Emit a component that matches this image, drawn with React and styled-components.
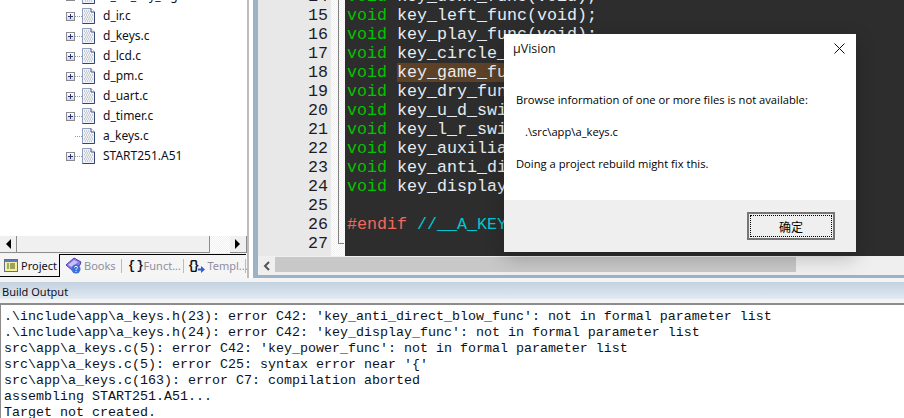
import styled, { createGlobalStyle } from 'styled-components';

const GlobalStyle = createGlobalStyle`
    html, body {
        margin: 0;
        padding: 0;
        background: #f4f4f4;
    }
`;

const Page = styled.div`
    position: relative;
    width: 904px;
    height: 418px;
    overflow: hidden;
    display: flex;
    flex-direction: column;
    background: #f4f4f4;
`;

const Workspace = styled.div`
    display: flex;
    height: 278px;
    flex-shrink: 0;
`;

const ProjectPane = styled.div`
    width: 247px;
    display: flex;
    flex-direction: column;
    border-right: 2px solid #bdbdbd;
    background: #fff;
`;

const Tree = styled.div`
    flex: 1;
    height: 236px;
    overflow: hidden;
    font-family: "Noto Sans", sans-serif;
    font-size: 12px;
    color: #10101a;
`;

const TreeList = styled.div`
    margin-top: -14px;
    padding-left: 66px;
    background-image: linear-gradient(#999 50%, transparent 50%);
    background-size: 1px 2px;
    background-repeat: no-repeat;
    background-position: 70px 0;
`;

const TreeRow = styled.div`
    display: flex;
    align-items: center;
    height: 20px;
`;

const Toggle = styled.div`
    width: 9px;
    height: 9px;
    box-sizing: border-box;
    border: 1px solid #8a8a8a;
    background: linear-gradient(#fff, #d8d8d8);
    position: relative;
    flex-shrink: 0;
    visibility: ${(p) => (p.$hidden ? 'hidden' : 'visible')};
    &::before {
        content: '';
        position: absolute;
        left: 1px;
        top: 3px;
        width: 5px;
        height: 1px;
        background: #24357e;
    }
    &::after {
        content: '';
        position: absolute;
        left: 3px;
        top: 1px;
        width: 1px;
        height: 5px;
        background: #24357e;
    }
`;

const Connector = styled.div`
    width: 7px;
    height: 1px;
    flex-shrink: 0;
    background-image: linear-gradient(90deg, #999 50%, transparent 50%);
    background-size: 2px 1px;
`;

const FileName = styled.span`
    margin-left: 8px;
    margin-top: -1px;
    white-space: nowrap;
`;

const TreeScroll = styled.div`
    height: 17px;
    display: flex;
    background: repeating-conic-gradient(#f0f0f0 0 25%, #fff 0 50%) 0 0 / 2px 2px;
    border-bottom: 1px solid #f0f0f0;
`;

const ScrollButton = styled.div`
    width: 17px;
    box-sizing: border-box;
    background: #f0f0f0;
    border-right: 1px solid #8d8d8d;
    border-bottom: 1px solid #8d8d8d;
    display: flex;
    align-items: center;
    justify-content: center;
    flex-shrink: 0;
`;

const ScrollThumb = styled.div`
    width: 193px;
    box-sizing: border-box;
    background: #f0f0f0;
    border-right: 1px solid #8d8d8d;
    border-bottom: 1px solid #8d8d8d;
`;

const ScrollTrack = styled.div`
    flex: 1;
`;

const Tabs = styled.div`
    height: 24px;
    display: flex;
    align-items: stretch;
    background: #f5f5f5;
    font-family: "Noto Sans", sans-serif;
    font-size: 11px;
`;

const ActiveTab = styled.div`
    width: 60px;
    height: 23px;
    box-sizing: border-box;
    display: flex;
    align-items: center;
    gap: 3px;
    padding: 1px 0 0 4px;
    border-right: 1px solid #000;
    border-bottom: 1px solid #000;
    color: #10101a;
    flex-shrink: 0;
`;

const Tab = styled.div`
    width: ${(p) => p.$width}px;
    height: 22px;
    box-sizing: border-box;
    border-top: 1px solid #000;
    display: flex;
    align-items: center;
    gap: ${(p) => p.$gap}px;
    padding-left: ${(p) => p.$pad}px;
    color: #8f8f9f;
    white-space: nowrap;
    flex-shrink: 0;
    position: relative;
    &::after {
        content: '';
        position: absolute;
        right: 0;
        top: 4px;
        height: 14px;
        width: 1px;
        background: #bbb;
    }
`;

const Braces = styled.span`
    font-family: "Liberation Mono", monospace;
    font-size: 12px;
    font-weight: 700;
    letter-spacing: -3px;
    color: #111;
`;

const Divider = styled.div`
    width: 4px;
    background: #fff;
    flex-shrink: 0;
`;

const EditorPane = styled.div`
    flex: 1;
    min-width: 0;
    display: flex;
    flex-direction: column;
    border: 1px solid #9db2c4;
    border-left-width: 5px;
    border-top: 0;
    border-right: 0;
    border-bottom-width: 3px;
`;

const EditorBody = styled.div`
    height: 256px;
    display: flex;
    overflow: hidden;
    flex-shrink: 0;
`;

const Gutter = styled.div`
    width: 73px;
    background: #e8e8e8;
    flex-shrink: 0;
`;

const FoldMargin = styled.div`
    width: 14px;
    flex-shrink: 0;
    position: relative;
    background: repeating-conic-gradient(#f0f0f0 0 25%, #fff 0 50%) 0 0 / 2px 2px;
    &::after {
        content: '';
        position: absolute;
        left: 7px;
        top: 0;
        width: 6px;
        height: 244px;
        box-sizing: border-box;
        border-left: 1px solid #808080;
        border-bottom: 1px solid #808080;
    }
`;

const Code = styled.div`
    flex: 1;
    background: #2d2d2d;
    padding-left: 2px;
`;

const Lines = styled.div`
    margin-top: -13px;
    font-family: "Liberation Mono", monospace;
    font-size: 16.67px;
    line-height: 19px;
    white-space: pre;
`;

const LineNumber = styled.div`
    height: 19px;
    text-align: right;
    padding-right: 3px;
    color: #1c1c28;
`;

const Keyword = styled.span`
    color: #00c400;
`;

const Ident = styled.span`
    color: #e6ecf2;
    background: ${(p) => (p.$marked ? '#5c4126' : 'transparent')};
`;

const Directive = styled.span`
    color: #f2695c;
`;

const Comment = styled.span`
    color: #00c8d0;
`;

const CodeLine = styled.div`
    height: 19px;
`;

const EditorScroll = styled.div`
    height: 19px;
    display: flex;
    background: #efefef;
`;

const ArrowCell = styled.div`
    width: 17px;
    display: flex;
    align-items: center;
    justify-content: center;
    flex-shrink: 0;
`;

const EditorThumb = styled.div`
    width: 521px;
    height: 15px;
    margin-top: 1px;
    background: #c8c8c8;
`;

const Output = styled.div`
    flex: 1;
    display: flex;
    flex-direction: column;
    background: #fff;
    margin-top: 4px;
    min-height: 0;
`;

const OutputHeader = styled.div`
    height: 17px;
    flex-shrink: 0;
    padding: 2px 0 0 2px;
    box-sizing: border-box;
    display: flex;
    align-items: center;
    background: linear-gradient(#c3d2e0, #e2eaf2);
    font-family: "Noto Sans", sans-serif;
    font-size: 11px;
    color: #10101a;
`;

const OutputGap = styled.div`
    height: 4px;
    flex-shrink: 0;
    background: #f4f4f4;
    border-bottom: 2px solid #8c8c8c;
`;

const OutputText = styled.div`
    flex: 1;
    min-height: 0;
    border-left: 1px solid #8c8c8c;
    padding: 4px 0 0 3px;
    font-family: "Liberation Mono", monospace;
    font-size: 13.33px;
    line-height: 16px;
    color: #111;
    white-space: pre;
    overflow: hidden;
`;

const Dialog = styled.div`
    position: absolute;
    left: 504px;
    top: 34px;
    width: 352px;
    height: 218px;
    background: #fff;
    display: flex;
    flex-direction: column;
    box-shadow: 0 6px 18px rgba(0, 0, 0, 0.22);
    font-family: "Open Sans", "Noto Sans", sans-serif;
    font-size: 11.2px;
    color: #000;
`;

const DialogTitleBar = styled.div`
    height: 28px;
    display: flex;
    align-items: center;
    justify-content: space-between;
    padding: 0 11px 0 9px;
    font-size: 12.5px;
    color: #111;
`;

const DialogBody = styled.div`
    flex: 1;
    padding: 30px 12px 0;
    line-height: 16px;
`;

const Paragraph = styled.div`
    margin-bottom: 16px;
    padding-left: ${(p) => p.$indent || 0}px;
`;

const DialogFooter = styled.div`
    height: 52px;
    background: #efefef;
    display: flex;
    justify-content: flex-end;
    padding: 12px 21px 0 0;
    box-sizing: border-box;
`;

const OkButton = styled.button`
    width: 88px;
    height: 28px;
    box-sizing: border-box;
    border: 2px solid #767676;
    background: #efefef;
    padding: 1px;
    font-family: "Noto Sans CJK SC", sans-serif;
    font-size: 12px;
    color: #000;
`;

const FocusRing = styled.div`
    height: 100%;
    border: 1px dotted #000;
    display: flex;
    align-items: center;
    justify-content: center;
    box-sizing: border-box;
`;

const FILES = ['d_rtc_key_cfg.c', 'd_ir.c', 'd_keys.c', 'd_lcd.c', 'd_pm.c', 'd_uart.c', 'd_timer.c', 'a_keys.c', 'START251.A51'];

const CODE = [
    [14, 'key_down_func(void);'],
    [15, 'key_left_func(void);'],
    [16, 'key_play_func(void);'],
    [17, 'key_circle_func(void);'],
    [18, 'key_game_func(void);', 13],
    [19, 'key_dry_func(void);'],
    [20, 'key_u_d_swing_func(void);'],
    [21, 'key_l_r_swing_func(void);'],
    [22, 'key_auxiliary_func(void);'],
    [23, 'key_anti_direct_blow_func(void);'],
    [24, 'key_display_func(void);'],
];

const BUILD_LOG = [
    ".\\include\\app\\a_keys.h(23): error C42: 'key_anti_direct_blow_func': not in formal parameter list",
    ".\\include\\app\\a_keys.h(24): error C42: 'key_display_func': not in formal parameter list",
    "src\\app\\a_keys.c(5): error C42: 'key_power_func': not in formal parameter list",
    "src\\app\\a_keys.c(5): error C25: syntax error near '{'",
    "src\\app\\a_keys.c(163): error C7: compilation aborted",
    'assembling START251.A51...',
    'Target not created.',
];

function FileIcon() {
    return (
        <svg width="13" height="16" viewBox="0 0 13 16" style={{ flexShrink: 0 }}>
            <path d="M0.5 0.5H9L12.5 4V15.5H0.5Z" fill="#eef2f8" stroke="#8c9cc0" />
            <path d="M9 0.5V4H12.5" fill="#fff" stroke="#3c4c80" />
            <path d="M2 3h6M3 5h5M2 7h9M3 9h8M2 11h9M3 13h8" stroke="#a8a8a8" strokeDasharray="1 1" />
            <path d="M12.5 4V15.5H0.5" fill="none" stroke="#34456f" />
        </svg>
    );
}

function ProjectIcon() {
    return (
        <svg width="14" height="13" viewBox="0 0 14 13" style={{ flexShrink: 0 }}>
            <rect x="0.5" y="0.5" width="13" height="12" fill="#f4f0a0" stroke="#6a6a80" />
            <rect x="1" y="1" width="12" height="2" fill="#5a78c8" />
            <path d="M3 5h2M3 7h2M3 9h2" stroke="#208020" />
            <path d="M6 5h5M6 7h5M6 9h5" stroke="#505010" />
        </svg>
    );
}

function BooksIcon() {
    return (
        <svg width="17" height="17" viewBox="0 0 17 17" style={{ flexShrink: 0 }}>
            <path d="M1 8L9 1L16 5L15 8L8 14Z" fill="#8a78e8" stroke="#5040b0" />
            <path d="M3 8L9 3L13 5L7 10Z" fill="#c8c0f8" />
            <circle cx="11" cy="12" r="4.5" fill="#3c70d8" />
            <path d="M9.5 10.5C9.5 9 12.5 9 12.5 10.5C12.5 11.7 11 11.5 11 13M11 14V15" stroke="#fff" fill="none" />
        </svg>
    );
}

function ArrowMark() {
    return (
        <svg width="7" height="7" viewBox="0 0 7 7" style={{ marginTop: 8, flexShrink: 0 }}>
            <path d="M0 2.5H3V0L7 3.5L3 7V4.5H0Z" fill="#2f5fd0" />
        </svg>
    );
}

function Triangle({ dir }) {
    return (
        <svg width="6" height="10" viewBox="0 0 6 10">
            <path d={dir === 'left' ? 'M6 0V10L1 5Z' : 'M0 0V10L5 5Z'} fill="#000" />
        </svg>
    );
}

function CloseIcon() {
    return (
        <svg width="11" height="11" viewBox="0 0 11 11">
            <path d="M0.5 0.5L10.5 10.5M10.5 0.5L0.5 10.5" stroke="#111" strokeWidth="1" fill="none" />
        </svg>
    );
}

function Chevron() {
    return (
        <svg width="7" height="10" viewBox="0 0 7 10">
            <path d="M6 1L2 5L6 9" stroke="#555" strokeWidth="2" fill="none" />
        </svg>
    );
}

function App() {
    return (
        <Page>
            <GlobalStyle />
            <Workspace>
                <ProjectPane>
                    <Tree>
                        <TreeList>
                            {FILES.map((name) => (
                                <TreeRow key={name}>
                                    <Toggle $hidden={name === 'a_keys.c'} />
                                    <Connector />
                                    <FileIcon />
                                    <FileName>{name}</FileName>
                                </TreeRow>
                            ))}
                        </TreeList>
                    </Tree>
                    <TreeScroll>
                        <ScrollButton><Triangle dir="left" /></ScrollButton>
                        <ScrollThumb />
                        <ScrollTrack />
                        <ScrollButton><Triangle dir="right" /></ScrollButton>
                    </TreeScroll>
                    <Tabs>
                        <ActiveTab><ProjectIcon />Project</ActiveTab>
                        <Tab $width={62} $pad={5} $gap={2}><BooksIcon />Books</Tab>
                        <Tab $width={62} $pad={6} $gap={3}><Braces>{'{ }'}</Braces>Funct...</Tab>
                        <Tab $width={62} $pad={4} $gap={2}><Braces>{'{}'}</Braces><ArrowMark />Templ...</Tab>
                    </Tabs>
                </ProjectPane>
                <Divider />
                <EditorPane>
                    <EditorBody>
                        <Gutter>
                            <Lines>
                                {CODE.map(([n]) => <LineNumber key={n}>{n}</LineNumber>)}
                                <LineNumber>25</LineNumber>
                                <LineNumber>26</LineNumber>
                                <LineNumber>27</LineNumber>
                            </Lines>
                        </Gutter>
                        <FoldMargin />
                        <Code>
                            <Lines>
                                {CODE.map(([n, text, marked]) => (
                                    <CodeLine key={n}>
                                        <Keyword>void</Keyword>{' '}
                                        {marked ? (
                                            <>
                                                <Ident $marked>{text.slice(0, marked)}</Ident>
                                                <Ident>{text.slice(marked)}</Ident>
                                            </>
                                        ) : (
                                            <Ident>{text}</Ident>
                                        )}
                                    </CodeLine>
                                ))}
                                <CodeLine />
                                <CodeLine>
                                    <Directive>#endif</Directive> <Comment>//__A_KEYS_H__</Comment>
                                </CodeLine>
                            </Lines>
                        </Code>
                    </EditorBody>
                    <EditorScroll>
                        <ArrowCell><Chevron /></ArrowCell>
                        <EditorThumb />
                    </EditorScroll>
                </EditorPane>
            </Workspace>
            <Output>
                <OutputHeader>Build Output</OutputHeader>
                <OutputGap />
                <OutputText>
                    {BUILD_LOG.map((line) => <div key={line}>{line}</div>)}
                </OutputText>
            </Output>
            <Dialog>
                <DialogTitleBar>
                    <span>µVision</span>
                    <CloseIcon />
                </DialogTitleBar>
                <DialogBody>
                    <Paragraph>Browse information of one or more files is not available:</Paragraph>
                    <Paragraph $indent={9}>.\src\app\a_keys.c</Paragraph>
                    <Paragraph>Doing a project rebuild might fix this.</Paragraph>
                </DialogBody>
                <DialogFooter>
                    <OkButton><FocusRing>确定</FocusRing></OkButton>
                </DialogFooter>
            </Dialog>
        </Page>
    );
}

export default App;
